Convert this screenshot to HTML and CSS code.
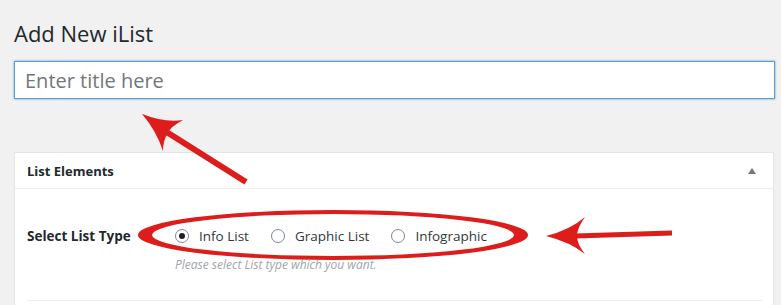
FILE: index.html
```html
<!DOCTYPE html>
<html lang="en">
<head>
    <meta charset="UTF-8">
    <title>Add New iList</title>
    <link rel="stylesheet" href="styles.css">
</head>
<body>
    <div class="wrap">
        <h1>Add New iList</h1>
        <div class="title-box">
            <input type="text" class="title-input" placeholder="Enter title here">
        </div>

        <div class="postbox">
            <div class="postbox-head">
                <h2>List Elements</h2>
                <span class="toggle-arrow"></span>
            </div>
            <div class="postbox-body">
                <div class="field-row">
                    <div class="field-label">Select List Type</div>
                    <div class="field-input">
                        <div class="radios">
                            <label class="radio"><span class="dot checked"></span>Info List</label>
                            <label class="radio"><span class="dot"></span>Graphic List</label>
                            <label class="radio"><span class="dot"></span>Infographic</label>
                        </div>
                        <p class="help">Please select List type which you want.</p>
                    </div>
                </div>
                <div class="divider"></div>
            </div>
        </div>
    </div>

    <!-- red annotation marks drawn over the screenshot -->
    <svg class="marks" width="781" height="305" viewBox="0 0 781 305">
        <path fill="#dd1c1c" fill-rule="evenodd"
              d="M138 235 A195 25 0 1 0 528 235 A195 25 0 1 0 138 235 Z
                 M152 235 A181 21 0 1 1 514 235 A181 21 0 1 1 152 235 Z"/>
        <line x1="246" y1="182" x2="165" y2="131" stroke="#dd1c1c" stroke-width="6"/>
        <path fill="#dd1c1c" d="M142 114 Q165 123 183 120 Q170 127 168 133 Q163 140 163 151 Q156 130 142 114 Z"/>
        <line x1="672" y1="233" x2="575" y2="236" stroke="#dd1c1c" stroke-width="5"/>
        <path fill="#dd1c1c" d="M546 236 Q570 230 585 217 Q577 228 577 236 Q577 244 585 254 Q570 242 546 236 Z"/>
    </svg>
</body>
</html>
```

FILE: styles.css
```css
body {
    margin: 0;
    background-color: #f1f1f1;
    font-family: "Open Sans", "Noto Sans", sans-serif;
    color: #23282d;
    position: relative;
}

.wrap {
    padding: 0 6px 0 14px;
    width: 761px;
}

h1 {
    margin: 0;
    padding-top: 18px;
    font-size: 22px;
    font-weight: 400;
    line-height: 30px;
    color: #23282d;
}

.title-box {
    margin-top: 13px;
}

.title-input {
    box-sizing: border-box;
    width: 761px;
    height: 38px;
    margin: 0;
    padding: 0 10px;
    border: 1px solid #5b9dd9;
    box-shadow: 0 0 2px rgba(30, 140, 190, 0.8);
    font-family: "Open Sans", "Noto Sans", sans-serif;
    font-size: 20px;
    color: #32373c;
    background: #fff;
    outline: none;
}

.title-input::placeholder {
    color: #72777c;
}

.postbox {
    margin-top: 53px;
    width: 758px;
    background-color: #fff;
    border: 1px solid #e5e5e5;
    box-shadow: 0 1px 1px rgba(0, 0, 0, 0.04);
}

.postbox-head {
    display: flex;
    align-items: center;
    justify-content: space-between;
    height: 35px;
    padding: 0 17px 0 12px;
    border-bottom: 1px solid #eee;
}

.postbox-head h2 {
    margin: 0;
    font-size: 13px;
    font-weight: 700;
    color: #23282d;
}

.toggle-arrow {
    width: 0;
    height: 0;
    border-left: 4px solid transparent;
    border-right: 4px solid transparent;
    border-bottom: 6px solid #72777c;
}

.postbox-body {
    padding: 0 11px 0 12px;
}

.field-row {
    display: flex;
    align-items: flex-start;
    padding-top: 37px;
}

.field-label {
    width: 148px;
    font-size: 13.5px;
    font-weight: 700;
    line-height: 18px;
    padding-top: 1px;
}

.radios {
    display: flex;
    align-items: center;
    height: 20px;
}

.radio {
    display: flex;
    align-items: center;
    font-size: 13.5px;
    color: #32373c;
    margin-right: 22px;
}

.dot {
    box-sizing: border-box;
    width: 14px;
    height: 14px;
    border: 1px solid #7e8993;
    border-radius: 50%;
    margin-right: 10px;
    display: inline-flex;
    align-items: center;
    justify-content: center;
}

.dot.checked::after {
    content: "";
    width: 6px;
    height: 6px;
    border-radius: 50%;
    background: #1e1e1e;
}

.help {
    margin: 11px 0 0;
    font-size: 12px;
    font-style: italic;
    color: #a0a5aa;
    line-height: 16px;
}

.divider {
    margin-top: 27px;
    border-top: 1px solid #eee;
    height: 10px;
}

.marks {
    position: absolute;
    top: 0;
    left: 0;
    pointer-events: none;
}
```
